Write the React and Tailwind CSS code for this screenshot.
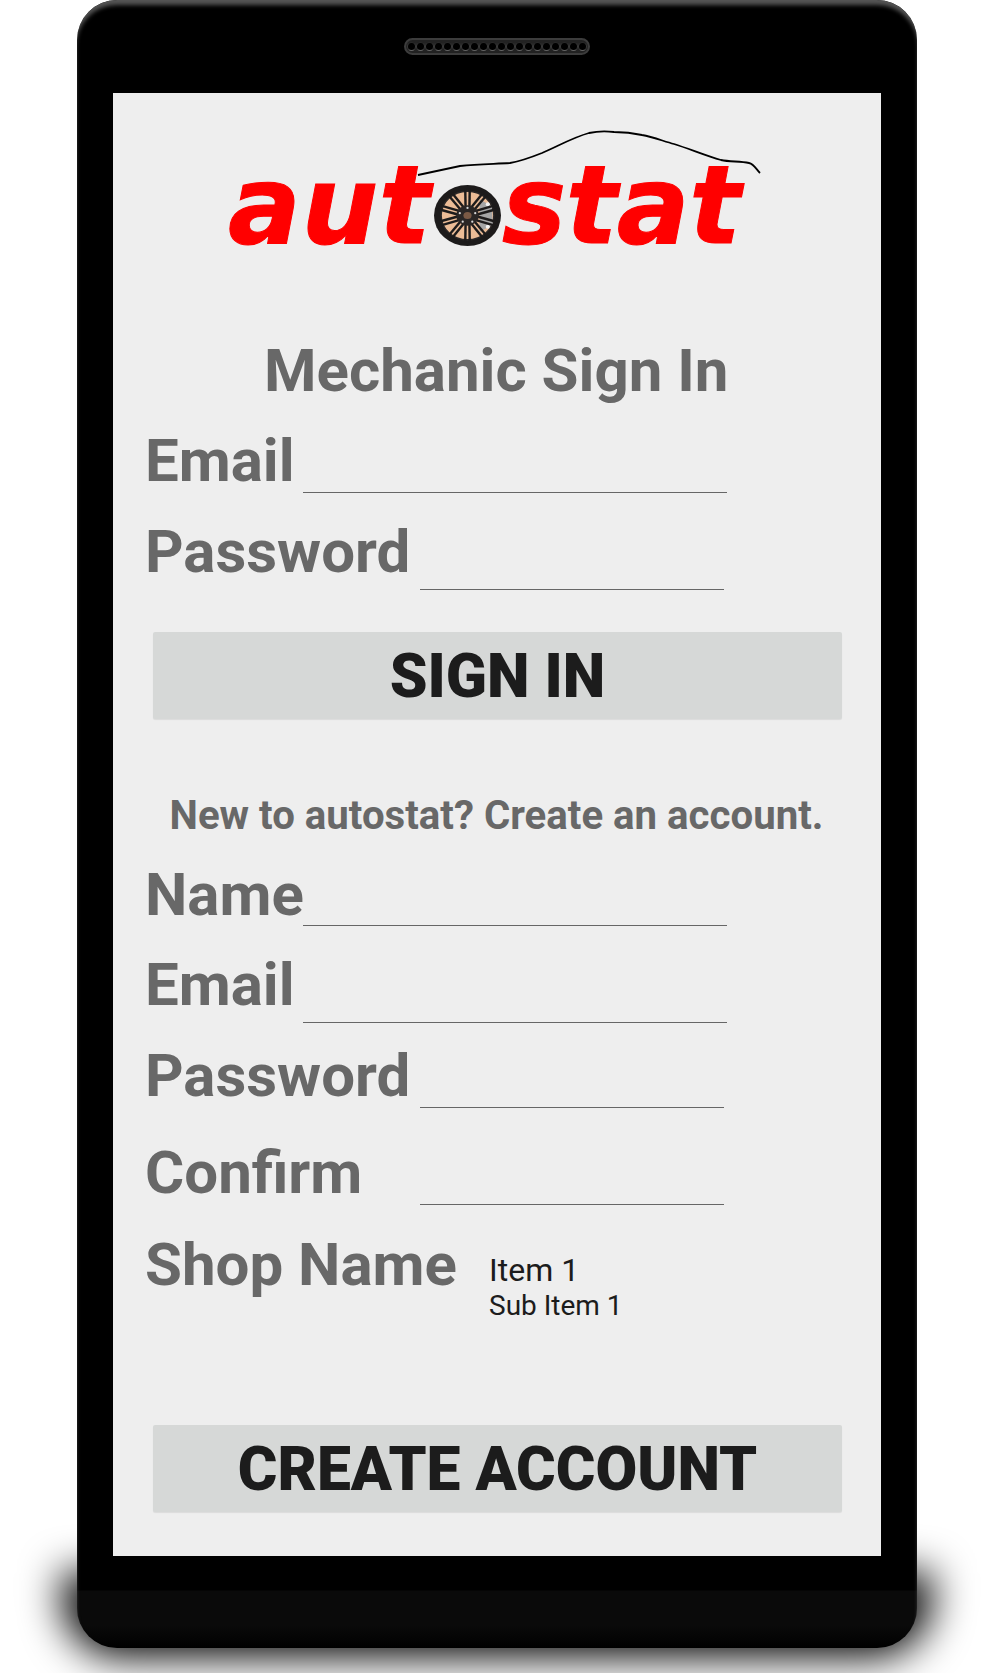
const labelClass = "text-[60px] font-bold leading-none text-[#686868] whitespace-nowrap";

function Speaker() {
  return (
    <div className="mx-auto flex h-[17px] w-[186px] items-center justify-center rounded-full border-2 border-[#3c3c3c] bg-[#222222]">
      {Array.from({ length: 20 }).map((_, i) => (
        <span key={i} className="h-[9px] w-[9px] shrink-0 rounded-full border border-t-[#2a2a2a] border-x-[#3a3a3a] border-b-[#666666] bg-black" />
      ))}
    </div>
  );
}

function Wheel() {
  const spokes = Array.from({ length: 10 }).map((_, i) => (i * 36 * Math.PI) / 180);
  const bolts = Array.from({ length: 5 }).map((_, i) => ((i * 72 - 90) * Math.PI) / 180);
  return (
    <svg width="67" height="61" viewBox="-33 -30 66 60" className="ml-[3px] mr-[1px] shrink-0 translate-y-[-14px]">
      <ellipse cx="0" cy="0" rx="33" ry="30" fill="#1d1b1b" />
      <ellipse cx="0" cy="0" rx="26" ry="24" fill="#ecbc96" />
      <ellipse cx="0" cy="0" rx="26" ry="24" fill="none" stroke="#2a2727" strokeWidth="1.5" />
      <path d="M12 -16 L24 -9 L25 9 L12 16 Z" fill="#a5a5a5" />
      <circle cx="20" cy="-11" r="2" fill="#f2f2f2" />
      <circle cx="20" cy="11" r="2" fill="#f2f2f2" />
      {spokes.map((a, i) => (
        <g key={i} stroke="#1d1b1b" strokeWidth="2.4">
          <line x1={Math.cos(a) * 6} y1={Math.sin(a) * 6} x2={Math.cos(a + 0.24) * 30} y2={Math.sin(a + 0.24) * 27} />
          <line x1={Math.cos(a) * 6} y1={Math.sin(a) * 6} x2={Math.cos(a - 0.24) * 30} y2={Math.sin(a - 0.24) * 27} />
        </g>
      ))}
      <ellipse cx="0" cy="0" rx="11" ry="10" fill="#2a2625" />
      {bolts.map((a, i) => (
        <circle key={i} cx={Math.cos(a) * 8} cy={Math.sin(a) * 7.5} r="1.1" fill="#d8d8d8" />
      ))}
      <ellipse cx="0" cy="0" rx="4" ry="3.5" fill="#7b5a45" />
    </svg>
  );
}

function Logo() {
  return (
    <div className="relative h-[187px] w-full">
      <svg width="768" height="187" viewBox="113 93 768 187" className="absolute left-0 top-[1px]">
        <path
          d="M418 174 C432 171 446 168 460 165 C478 163 494 163 510 162 C522 160 532 156 542 152 C558 145 574 136 589 132 C598 130 606 130 614 131 C624 131 633 132 642 134 C653 136 663 140 674 143 C690 148 706 155 721 159 C730 161 740 160 749 162 C754 163 756 168 760 172"
          fill="none"
          stroke="#000000"
          strokeWidth="1.8"
        />
      </svg>
      <div className="absolute left-[115px] top-[59px] flex items-end text-[108px] font-bold italic leading-[108px] text-[#ff0000] font-['DejaVu_Sans',sans-serif] [-webkit-text-stroke:1px_#ff0000]">
        <span className="tracking-[0.5px]">aut</span>
        <Wheel />
        <span className="tracking-[-0.5px]">stat</span>
      </div>
    </div>
  );
}

function Field({ label, lineWidth, lineLeft, rowHeight, labelBottom }) {
  return (
    <div className="relative flex items-end" style={{ height: rowHeight }}>
      <label className={`${labelClass} shrink-0`} style={{ marginBottom: labelBottom, width: lineLeft }}>
        {label}
      </label>
      <input className="h-[40px] shrink-0 border-b border-[#666666] bg-transparent outline-none" style={{ width: lineWidth }} />
    </div>
  );
}

function ActionButton({ children }) {
  return (
    <button className="flex h-[87px] w-[689px] items-center justify-center rounded-[2px] bg-[#d6d8d7] pt-[3px] text-[60.5px] font-black text-[#1c1c1c] shadow-[0_1px_1px_rgba(0,0,0,0.08)]">
      {children}
    </button>
  );
}

export default function App() {
  return (
    <div className="relative h-[1673px] w-[993px] overflow-hidden bg-white font-['Roboto',sans-serif]">
      <div className="absolute left-[62px] top-[1572px] h-[85px] w-[870px] rounded-b-[60px] bg-black blur-[20px]" />
      <div className="relative ml-[77px] h-[1648px] w-[840px] rounded-[40px] bg-[linear-gradient(#000_0,#000_1590px,#0a0a0a_1591px,#0a0a0a_1625px,#000_1648px)] pt-[38px] shadow-[inset_0_6px_4px_-1px_#555555]">
        <Speaker />
        <div className="ml-[36px] mt-[38px] h-[1463px] w-[768px] bg-[#eeeeee]">
          <Logo />
          <h1 className="ml-[151px] mt-[61px] text-[60px] font-bold leading-none text-[#686868] whitespace-nowrap">Mechanic Sign In</h1>
          <div className="ml-[32px]">
            <Field label="Email" lineLeft={158} lineWidth={424} rowHeight={92} labelBottom={2} />
            <Field label="Password" lineLeft={275} lineWidth={304} rowHeight={97} labelBottom={8} />
          </div>
          <div className="ml-[40px] mt-[42px]">
            <ActionButton>SIGN IN</ActionButton>
          </div>
          <p className="mt-[77px] text-center text-[40.2px] font-bold leading-[40px] text-[#686868] pr-[1px]">New to autostat? Create an account.</p>
          <div className="ml-[32px]">
            <Field label="Name" lineLeft={158} lineWidth={424} rowHeight={90} labelBottom={1} />
            <Field label="Email" lineLeft={158} lineWidth={424} rowHeight={97} labelBottom={8} />
            <Field label="Password" lineLeft={275} lineWidth={304} rowHeight={85} labelBottom={2} />
            <Field label="Confirm" lineLeft={275} lineWidth={304} rowHeight={97} labelBottom={2} />
            <div className="flex items-start pt-[30px]">
              <span className={`${labelClass} w-[344px]`}>Shop Name</span>
              <div className="mt-[16px] text-[#1c1c1c]">
                <div className="text-[32px] leading-[39px]">Item 1</div>
                <div className="text-[28px] leading-[32px]">Sub Item 1</div>
              </div>
            </div>
          </div>
          <div className="ml-[40px] mt-[103px]">
            <ActionButton>CREATE ACCOUNT</ActionButton>
          </div>
        </div>
      </div>
    </div>
  );
}
